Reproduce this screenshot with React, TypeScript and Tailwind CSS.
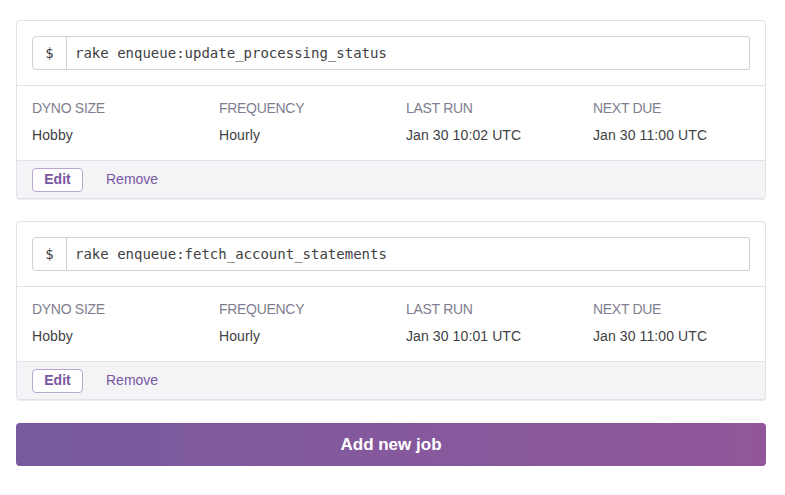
const jobs = [
  {
    command: "rake enqueue:update_processing_status",
    dyno: "Hobby",
    frequency: "Hourly",
    lastRun: "Jan 30 10:02 UTC",
    nextDue: "Jan 30 11:00 UTC",
  },
  {
    command: "rake enqueue:fetch_account_statements",
    dyno: "Hobby",
    frequency: "Hourly",
    lastRun: "Jan 30 10:01 UTC",
    nextDue: "Jan 30 11:00 UTC",
  },
];

type Job = (typeof jobs)[number];

function JobCard({ job }: { job: Job }) {
  const cols = [
    ["DYNO SIZE", job.dyno],
    ["FREQUENCY", job.frequency],
    ["LAST RUN", job.lastRun],
    ["NEXT DUE", job.nextDue],
  ];
  return (
    <div className="rounded-[4px] border border-[#e1e1e6] bg-white shadow-[0_1px_0_#ececf0]">
      {/* command */}
      <div className="border-b border-[#e1e1e6] px-[15px] py-[15px]">
        <div className="flex h-[34px] rounded-l-[4px] rounded-r-[2px] border border-[#cfcfd7]">
          <div className="flex w-[34px] items-center justify-center border-r border-[#cfcfd7] font-['DejaVu_Sans_Mono',monospace] text-[14px] text-[#3f3f44]">
            $
          </div>
          <div className="flex items-center pl-[8px] font-['DejaVu_Sans_Mono',monospace] text-[14px] text-[#3f3f44]">
            {job.command}
          </div>
        </div>
      </div>

      {/* details */}
      <div className="grid h-[74px] grid-cols-4 pt-[13px]">
        {cols.map(([label, value]) => (
          <div key={label} className="pl-[15px]">
            <div className="text-[14px] leading-[18px] tracking-[-0.3px] text-[#7f7e90]">{label}</div>
            <div className="mt-[9px] text-[14px] leading-[18px] tracking-[0.1px] text-[#3f3f44]">{value}</div>
          </div>
        ))}
      </div>

      {/* actions */}
      <div className="flex h-[38px] items-center gap-[23px] rounded-b-[4px] border-t border-[#e1e1e6] bg-[#f4f4f7] px-[15px]">
        <button className="h-[24px] w-[51px] rounded-[4px] border border-[#b9a6d0] bg-white text-[14px] font-bold text-[#79589f]">
          Edit
        </button>
        <button className="-mt-[1px] text-[14px] text-[#79589f]">Remove</button>
      </div>
    </div>
  );
}

export default function App() {
  return (
    <div className="flex min-h-[495px] w-[785px] flex-col gap-[22px] bg-white pl-[16px] pr-[19px] pt-[20px] font-['Liberation_Sans',Arial,sans-serif] text-[#3f3f44]">
      {jobs.map((job) => (
        <JobCard key={job.command} job={job} />
      ))}
      <button className="mt-[1px] h-[43px] w-full rounded-[4px] bg-gradient-to-r from-[#785aa0] to-[#915799] text-[17px] font-semibold text-white">
        Add new job
      </button>
    </div>
  );
}
